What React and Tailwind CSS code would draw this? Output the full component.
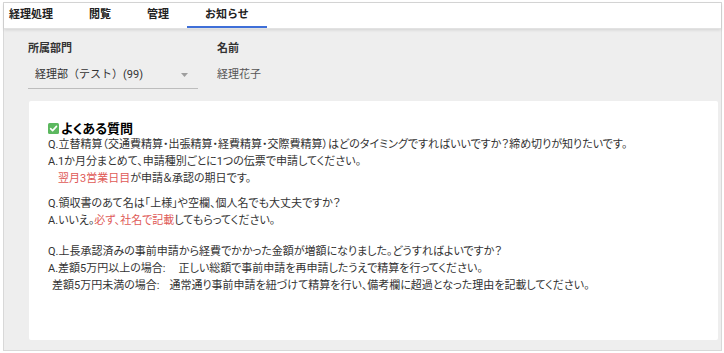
import { ChevronDown } from 'lucide-react'

const tabs = ['経理処理', '閲覧', '管理', 'お知らせ']

function CheckIcon() {
  return (
    <svg width="11" height="11" viewBox="0 0 11 11" className="shrink-0">
      <rect x="0" y="0" width="11" height="11" rx="1.5" fill="#5cb85f" />
      <path d="M2.6 5.7 L4.6 7.6 L8.5 3.4" fill="none" stroke="#fff" strokeWidth="1.6" strokeLinecap="round" strokeLinejoin="round" />
    </svg>
  )
}

export default function App() {
  return (
    <div
      className="w-[724px] h-[353px] bg-white pt-[2px] pl-[3px] pr-[2px] pb-[2px] text-[#333]"
      style={{ fontFamily: 'Roboto, "Noto Sans CJK JP", sans-serif' }}
    >
      <div className="h-full border border-[#d8d8d8] bg-[#eeeeee] flex flex-col">
        {/* tabs */}
        <div className="relative z-10 h-[26px] bg-white flex shadow-[0_1px_3px_rgba(0,0,0,0.12)] border-b border-[#e2e2e2]">
          {tabs.map((t, i) => (
            <div
              key={t}
              className={
                'flex items-center text-[11px] font-bold text-[#222] ' +
                (i === 0 ? 'pl-[5px] pr-[18px] ' : 'px-[18px] ') +
                (i === 3 ? 'border-b-2 border-[#3f6fd8] pt-[2px]' : '')
              }
            >
              {t}
            </div>
          ))}
        </div>

        <div className="flex-1 pl-[24px] pr-[3px] pt-[12px] pb-[10px] flex flex-col">
          {/* form */}
          <div className="flex gap-[19px]">
            <div className="w-[170px]">
              <div className="text-[11px] font-bold leading-[16px]">所属部門</div>
              <div className="mt-[5px] h-[27px] flex items-center justify-between pl-[7px] pr-[10px] border-b border-[#bdbdbd] text-[11px]">
                <span>経理部（テスト）(99)</span>
                <svg width="7" height="4" viewBox="0 0 7 4"><path d="M0 0 H7 L3.5 4 Z" fill="#9e9e9e" /></svg>
              </div>
            </div>
            <div>
              <div className="text-[11px] font-bold leading-[16px]">名前</div>
              <div className="mt-[5px] h-[27px] flex items-center text-[11px] text-[#555]">経理花子</div>
            </div>
          </div>

          {/* card */}
          <div className="mt-[12px] ml-[1px] flex-1 bg-white rounded-[2px] pt-[19px] pl-[19px] text-[11px] leading-[17px] [font-feature-settings:'palt']">
            <div className="flex items-center gap-[2px] h-[16px] text-[13px] font-bold text-black">
              <CheckIcon />
              <span>よくある質問</span>
            </div>
            <div>Q.立替精算（交通費精算・出張精算・経費精算・交際費精算）はどのタイミングですればいいですか？締め切りが知りたいです。</div>
            <div>A.1か月分まとめて、申請種別ごとに1つの伝票で申請してください。</div>
            <div className="pl-[10px]"><span className="text-[#e05a57]">翌月3営業日目</span>が申請＆承認の期日です。</div>

            <div className="mt-[8px]">Q.領収書のあて名は「上様」や空欄、個人名でも大丈夫ですか？</div>
            <div>A.いいえ。<span className="text-[#e05a57]">必ず、社名で記載</span>してもらってください。</div>

            <div className="mt-[14px]">Q.上長承認済みの事前申請から経費でかかった金額が増額になりました。どうすればよいですか？</div>
            <div>A.差額5万円以上の場合:<span className="ml-[13px]">正しい総額で事前申請を再申請したうえで精算を行ってください。</span></div>
            <div className="pl-[4px]">差額5万円未満の場合:<span className="ml-[10px]">通常通り事前申請を紐づけて精算を行い、備考欄に超過となった理由を記載してください。</span></div>
          </div>
        </div>
      </div>
    </div>
  )
}
